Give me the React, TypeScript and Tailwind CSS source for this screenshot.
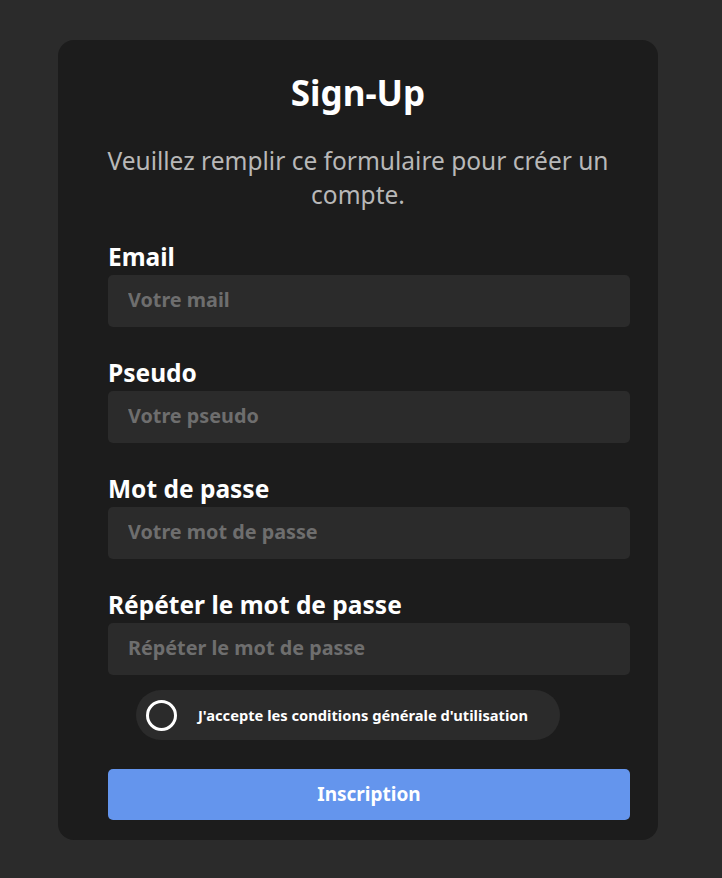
import { useState } from "react";

const FIELDS = [
    { label: "Email", placeholder: "Votre mail", type: "email" },
    { label: "Pseudo", placeholder: "Votre pseudo", type: "text" },
    { label: "Mot de passe", placeholder: "Votre mot de passe", type: "password" },
    { label: "Répéter le mot de passe", placeholder: "Répéter le mot de passe", type: "password" },
];

export default function App() {
    const [accepted, setAccepted] = useState(false);

    return (
        <div
            className="min-h-screen bg-[#2b2b2b] pt-10 pl-[58px]"
            style={{ fontFamily: '"Noto Sans", "Open Sans", sans-serif' }}
        >
            <div className="w-[600px] rounded-2xl bg-[#1c1c1c] px-[50px] pt-[33px] pb-5">
                <h1 className="text-center text-[35px] font-bold leading-[40px] text-white">Sign-Up</h1>
                <p className="mx-[-10px] mt-[31px] text-center text-[24.5px] leading-[34px] text-[#b8b8b8]">
                    Veuillez remplir ce formulaire pour créer un compte.
                </p>

                <form className="mt-[31px] flex w-[522px] flex-col gap-8" onSubmit={(e) => e.preventDefault()}>
                    {FIELDS.map((f) => (
                        <label key={f.label} className="flex flex-col gap-1">
                            <span className="text-[24.5px] font-bold leading-7 text-white">{f.label}</span>
                            <input
                                type={f.type}
                                placeholder={f.placeholder}
                                className="h-[52px] rounded-[5px] bg-[#2b2b2b] px-5 pb-[3px] text-[19.8px] font-bold text-white outline-none placeholder:text-[#6e6e6e]"
                            />
                        </label>
                    ))}
                </form>

                <button
                    type="button"
                    onClick={() => setAccepted((a) => !a)}
                    className="ml-[28px] mt-[15px] flex h-[50px] w-[424px] items-center gap-[21px] rounded-full bg-[#2b2b2b] pl-[10px]"
                >
                    <span className="flex h-[31px] w-[31px] items-center justify-center rounded-full border-[3px] border-white">
                        {accepted && <span className="h-[15px] w-[15px] rounded-full bg-white" />}
                    </span>
                    <span className="text-[14.7px] font-bold text-white">J'accepte les conditions générale d'utilisation</span>
                </button>

                <button
                    type="submit"
                    className="mt-[29px] h-[51px] w-[522px] rounded-[5px] bg-[#6495ed] text-[19px] font-bold text-white"
                >
                    Inscription
                </button>
            </div>
        </div>
    );
}
